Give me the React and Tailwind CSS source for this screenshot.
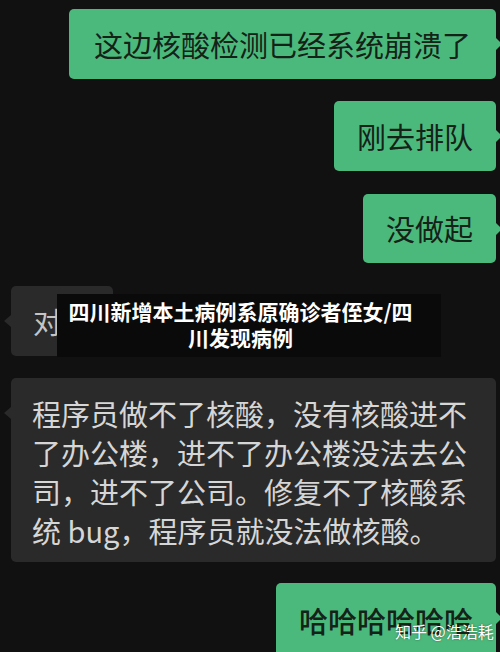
const cjk = { fontFamily: '"Noto Sans CJK SC", "Noto Sans", sans-serif' };

const GreenBubble = ({ children, className = '' }) => (
  <div className={`relative self-end mr-[4px] rounded-[5px] bg-[#4cb97c] text-[#142218] ${className}`}>
    {children}
    <span className="absolute right-[-6px] top-[29px] h-0 w-0 border-y-[6px] border-l-[6px] border-y-transparent border-l-[#4cb97c]" />
  </div>
);

const GrayBubble = ({ children, className = '', tailTop = 'top-[29px]' }) => (
  <div className={`relative self-start ml-[11px] rounded-[5px] bg-[#2a2a2a] ${className}`}>
    {children}
    <span className={`absolute left-[-7px] ${tailTop} h-0 w-0 border-y-[6px] border-r-[7px] border-y-transparent border-r-[#2a2a2a]`} />
  </div>
);

export default function App() {
  return (
    <div className="relative h-[652px] w-[500px] overflow-hidden bg-[#111111]" style={cjk}>
      <div className="flex flex-col pt-[9px]">
        <GreenBubble className="px-[25px] py-[21px] text-[29px] leading-[28px]">
          这边核酸检测已经系统崩溃了
        </GreenBubble>
        <GreenBubble className="mt-[22px] px-[23px] py-[21px] text-[29px] leading-[28px]">
          刚去排队
        </GreenBubble>
        <GreenBubble className="mt-[23px] px-[23px] py-[21px] text-[29px] leading-[27px]">
          没做起
        </GreenBubble>

        <GrayBubble className="mt-[23px] px-[22px] py-[21px] text-[29px] leading-[28px] text-[#c4c4c4]">
          对头
        </GrayBubble>

        <GrayBubble
          tailTop="top-[29px]"
          className="mt-[22px] mr-[4px] self-stretch pl-[21px] pr-[20px] pt-[16px] pb-[12px] text-[29px] leading-[39px] text-[#d6d6d6]"
        >
          程序员做不了核酸，没有核酸进不了办公楼，进不了办公楼没法去公司，进不了公司。修复不了核酸系统 bug，程序员就没法做核酸。
        </GrayBubble>

        <GreenBubble className="mt-[21px] h-[90px] px-[23px] pt-[22px] text-[29px] leading-[30px] font-medium">
          哈哈哈哈哈哈
        </GreenBubble>
      </div>

      {/* headline overlay */}
      <div className="absolute left-[57px] top-[294px] w-[384px] bg-[#0a0a0a] pl-[11px] pt-[4px] pb-[7px]">
        <div className="w-[345px] text-center text-[21px] font-bold leading-[26px] text-white">
          <div>四川新增本土病例系原确诊者侄女/四</div>
          <div>川发现病例</div>
        </div>
      </div>

      {/* watermark */}
      <div className="absolute left-[395px] top-[621px] text-[16px] leading-[20px] text-white [text-shadow:0_0_2px_rgba(0,0,0,0.5)]">
        知乎 @浩浩耗
      </div>
    </div>
  );
}
